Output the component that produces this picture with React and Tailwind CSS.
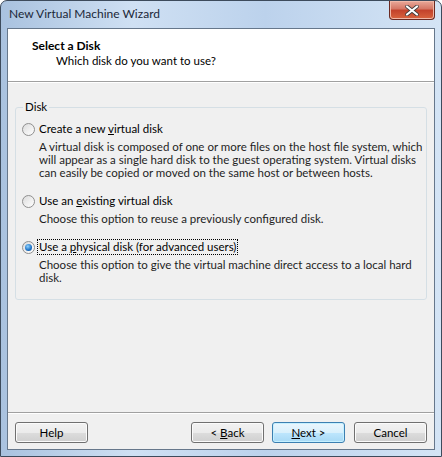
const font = { fontFamily: 'Lato, "Noto Sans", sans-serif' };

function Radio({ checked }) {
  return (
    <span className="relative inline-block w-[13px] h-[13px] shrink-0 rounded-full border border-[#8f8f8f] bg-[linear-gradient(135deg,#dcdcdc,#ffffff)]">
      {checked && (
        <span className="absolute left-[2px] top-[2px] w-[7px] h-[7px] rounded-full bg-[radial-gradient(circle_at_40%_35%,#8fd3ff,#1a6fc4_60%,#0d4a8a)]" />
      )}
    </span>
  );
}

function Option({ label, desc, checked, focused }) {
  return (
    <div className="flex flex-col">
      <div className="flex items-center h-[16px]">
        <Radio checked={checked} />
        <span
          className={
            "ml-[3px] px-[1px] leading-[14px] " +
            (focused ? "outline outline-1 outline-dotted outline-black" : "")
          }
        >
          {label}
        </span>
      </div>
      <div className="pl-[17px] mt-[3px] leading-[13px] text-[#1e1e1e]">
        {desc.map((l) => (
          <div key={l} className="whitespace-nowrap">
            {l}
          </div>
        ))}
      </div>
    </div>
  );
}

function Button({ children, primary }) {
  return (
    <button
      className={
        "w-[73px] h-[21px] rounded-[3px] border text-[11.5px] leading-none text-black " +
        (primary
          ? "border-[#3c7fb1] bg-[linear-gradient(#eaf6fd,#d9f0fc_50%,#bee6fd_50%,#a7d9f5)] shadow-[inset_0_0_0_1px_#c5f0ff]"
          : "border-[#707070] bg-[linear-gradient(#f2f2f2,#ebebeb_50%,#dddddd_50%,#cfcfcf)] shadow-[inset_0_0_0_1px_#fbfbfb]")
      }
    >
      {children}
    </button>
  );
}

export default function App() {
  return (
    <div
      className="w-[442px] h-[457px] flex flex-col rounded-t-[7px] border border-[#3d4b5c] bg-[linear-gradient(90deg,#a9c2df,#cfe0f3_30%,#bcd2ec_60%,#d4e4f5)] text-[11.5px] overflow-hidden"
      style={font}
    >
      {/* title bar */}
      <div className="h-[27px] flex items-start justify-between">
        <div className="pl-[8px] pt-[7px] text-[12px] text-[#1b2738] leading-none">
          New Virtual Machine Wizard
        </div>
        <div className="mr-[6px] w-[46px] h-[19px] rounded-b-[4px] border border-t-0 border-[#6b2a22] bg-[linear-gradient(#e9a99a,#d47563_45%,#c2412b_50%,#d9643e)] flex items-center justify-center shadow-[inset_0_0_0_1px_#f0b8a8]">
          <svg width="14" height="11" viewBox="0 0 14 11">
            <path
              d="M2 1.5 L12 9.5 M12 1.5 L2 9.5"
              stroke="#3a3a3a"
              strokeWidth="3.6"
              strokeLinecap="round"
            />
            <path
              d="M2 1.5 L12 9.5 M12 1.5 L2 9.5"
              stroke="#ffffff"
              strokeWidth="2.2"
              strokeLinecap="round"
            />
          </svg>
        </div>
      </div>

      {/* client */}
      <div className="mx-[6px] mb-[6px] flex-1 flex flex-col border border-[#66778b] bg-[#f0f0f0] text-black">
        <div className="h-[53px] bg-white border-b border-[#a0a0a0] pl-[24px] pt-[9px]">
          <div className="font-bold text-[12px] leading-[16px]">Select a Disk</div>
          <div className="pl-[24px] leading-[14px]">Which disk do you want to use?</div>
        </div>
        <div className="h-px bg-white" />

        <div className="flex-1 px-[7px] pt-[17px]">
          <fieldset className="relative min-w-0 border border-[#d5dfe5] rounded-[3px] h-[200px] pl-[6px] pr-[8px]">
            <legend className="ml-[1px] px-[2px] leading-[14px]">Disk</legend>
            <div className="flex flex-col gap-[14px] mt-[7px]">
              <Option
                label={
                  <>
                    Create a new <u>v</u>irtual disk
                  </>
                }
                desc={[
                  "A virtual disk is composed of one or more files on the host file system, which",
                  "will appear as a single hard disk to the guest operating system. Virtual disks",
                  "can easily be copied or moved on the same host or between hosts.",
                ]}
              />
              <Option
                label={
                  <>
                    Use an <u>e</u>xisting virtual disk
                  </>
                }
                desc={["Choose this option to reuse a previously configured disk."]}
              />
              <Option
                checked
                focused
                label={
                  <>
                    Use a <u>p</u>hysical disk (for advanced users)
                  </>
                }
                desc={[
                  "Choose this option to give the virtual machine direct access to a local hard",
                  "disk.",
                ]}
              />
            </div>
          </fieldset>
        </div>

        <div className="h-px bg-[#a0a0a0]" />
        <div className="h-px bg-white" />
        <div className="h-[35px] flex items-start pt-[8px] px-[7px]">
          <Button>Help</Button>
          <div className="flex-1" />
          <Button>
            &lt; <u>B</u>ack
          </Button>
          <div className="w-[8px]" />
          <Button primary>
            <u>N</u>ext &gt;
          </Button>
          <div className="w-[9px]" />
          <Button>Cancel</Button>
        </div>
      </div>
    </div>
  );
}
